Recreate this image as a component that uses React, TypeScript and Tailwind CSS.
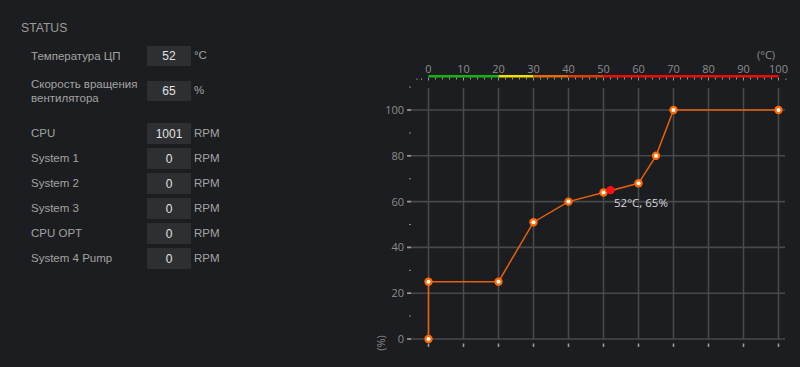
import React from "react";

const fans = [
  { name: "CPU", value: "1001" },
  { name: "System 1", value: "0" },
  { name: "System 2", value: "0" },
  { name: "System 3", value: "0" },
  { name: "CPU OPT", value: "0" },
  { name: "System 4 Pump", value: "0" },
];

const curve: [number, number][] = [
  [0, 0],
  [0, 25],
  [20, 25],
  [30, 51],
  [40, 60],
  [50, 64],
  [60, 68],
  [65, 80],
  [70, 100],
  [100, 100],
];

const X0 = 428.5;
const Y0 = 339;
const px = (t: number) => X0 + t * 3.5;
const py = (p: number) => Y0 - p * 2.29;

function FanChart() {
  const xs = [0, 10, 20, 30, 40, 50, 60, 70, 80, 90, 100];
  const ys = [0, 20, 40, 60, 80, 100];
  const minorY = [10, 30, 50, 70, 90, 110];
  const barTicks = Array.from({ length: 51 }, (_, i) => i * 2);

  return (
    <svg
      width={440}
      height={367}
      viewBox="360 0 440 367"
      className="block shrink-0"
      style={{ fontFamily: '"Open Sans", "Noto Sans", sans-serif' }}
    >
      {/* grid */}
      {xs.map((t) => (
        <g key={"v" + t}>
          <line x1={px(t)} x2={px(t)} y1={88} y2={340} stroke="#48494d" strokeWidth={1.6} />
          <rect x={px(t) - 0.8} y={343.5} width={1.6} height={3.5} fill="#9a9a9a" />
        </g>
      ))}
      {ys.map((p) => (
        <g key={"h" + p}>
          <line x1={408} x2={785} y1={py(p)} y2={py(p)} stroke="#48494d" strokeWidth={1.6} />
          <rect x={407} y={py(p) - 0.8} width={4} height={1.6} fill="#9a9a9a" />
          <text x={404} y={py(p) + 4} textAnchor="end" fontSize={11} fill="#8c8c8c">
            {p}
          </text>
        </g>
      ))}
      {minorY.map((p) => (
        <rect key={"m" + p} x={409} y={py(p) - 0.5} width={2} height={1} fill="#8a8a8a" />
      ))}

      {/* top temperature scale */}
      {xs.map((t) => (
        <text key={"t" + t} x={px(t)} y={73} textAnchor="middle" fontSize={11} fill="#8c8c8c">
          {t}
        </text>
      ))}
      <text x={766} y={59} textAnchor="middle" fontSize={11} fill="#8c8c8c">
        (°C)
      </text>
      <rect x={px(0)} y={75} width={70} height={2.5} fill="#12b312" />
      <rect x={px(20)} y={75} width={35} height={2.5} fill="#f0e000" />
      <rect x={px(30)} y={75} width={35} height={2.5} fill="#e86a00" />
      <rect x={px(40)} y={75} width={35} height={2.5} fill="#e23a00" />
      <rect x={px(50)} y={75} width={175} height={2.5} fill="#f00a0a" />
      {barTicks.map((t) => (
        <rect
          key={"b" + t}
          x={px(t) - 0.5}
          y={77.5}
          width={1}
          height={t % 10 === 0 ? 3 : 2}
          fill="#9a9a9a"
        />
      ))}
      <rect x={416.5} y={78.5} width={1} height={1.5} fill="#8a8a8a" />
      <rect x={421} y={78.5} width={1} height={1.5} fill="#8a8a8a" />
      <rect x={785.5} y={78.5} width={1} height={1.5} fill="#8a8a8a" />

      {/* y axis title */}
      <text
        x={382}
        y={343}
        fontSize={11}
        fill="#8c8c8c"
        textAnchor="middle"
        transform="rotate(-90 382 343)"
        dominantBaseline="middle"
      >
        (%)
      </text>

      {/* curve */}
      <polyline
        points={curve.map(([t, p]) => `${px(t)},${py(p)}`).join(" ")}
        fill="none"
        stroke="#e8600a"
        strokeWidth={1.5}
      />
      {curve.map(([t, p], i) => (
        <g key={"p" + i}>
          <circle cx={px(t)} cy={py(p)} r={4.2} fill="#ff6a00" />
          <circle cx={px(t)} cy={py(p)} r={2} fill="#ffffff" />
        </g>
      ))}
      <circle cx={px(52)} cy={py(65)} r={4.2} fill="#ff1010" />
      <text x={614} y={207} fontSize={11.5} fill="#d8d8d8">
        52°C, 65%
      </text>
    </svg>
  );
}

export default function App() {
  return (
    <div
      className="w-[800px] h-[367px] overflow-hidden flex bg-[#1c1d20]"
      style={{ fontFamily: '"Liberation Sans", Arial, sans-serif' }}
    >
      <div className="w-[360px] shrink-0 pt-[21px] pl-[21px]">
        <div className="text-[12.2px] leading-[15px] text-[#9c9c9c]">STATUS</div>

        <div className="mt-[10px] pl-[10px] flex items-center h-[20px]">
          <div className="w-[116px] text-[11.5px] text-[#a3a3a3] pt-[2px]">Температура ЦП</div>
          <div className="w-[44px] h-[20px] bg-[#2d2f32] flex items-center justify-center text-[12px] text-[#e2e2e2]">
            52
          </div>
          <div className="ml-[3px] text-[11.5px] text-[#a3a3a3]">°C</div>
        </div>

        <div className="mt-[11px] pl-[10px] flex items-center h-[28px]">
          <div className="w-[116px] text-[11.5px] leading-[14px] text-[#a3a3a3]">
            Скорость вращения вентилятора
          </div>
          <div className="w-[44px] h-[20px] bg-[#2d2f32] flex items-center justify-center text-[12px] text-[#e2e2e2]">
            65
          </div>
          <div className="ml-[3px] text-[11.5px] text-[#a3a3a3]">%</div>
        </div>

        <div className="mt-[18px] pl-[10px] flex flex-col gap-[4px]">
          {fans.map((f) => (
            <div key={f.name} className="flex items-center h-[21px]">
              <div className="w-[116px] text-[11.5px] text-[#a3a3a3]">{f.name}</div>
              <div className="w-[44px] h-[21px] bg-[#2d2f32] flex items-center justify-center text-[12px] text-[#e2e2e2]">
                {f.value}
              </div>
              <div className="ml-[3px] text-[11.5px] text-[#a3a3a3]">RPM</div>
            </div>
          ))}
        </div>
      </div>
      <FanChart />
    </div>
  );
}
